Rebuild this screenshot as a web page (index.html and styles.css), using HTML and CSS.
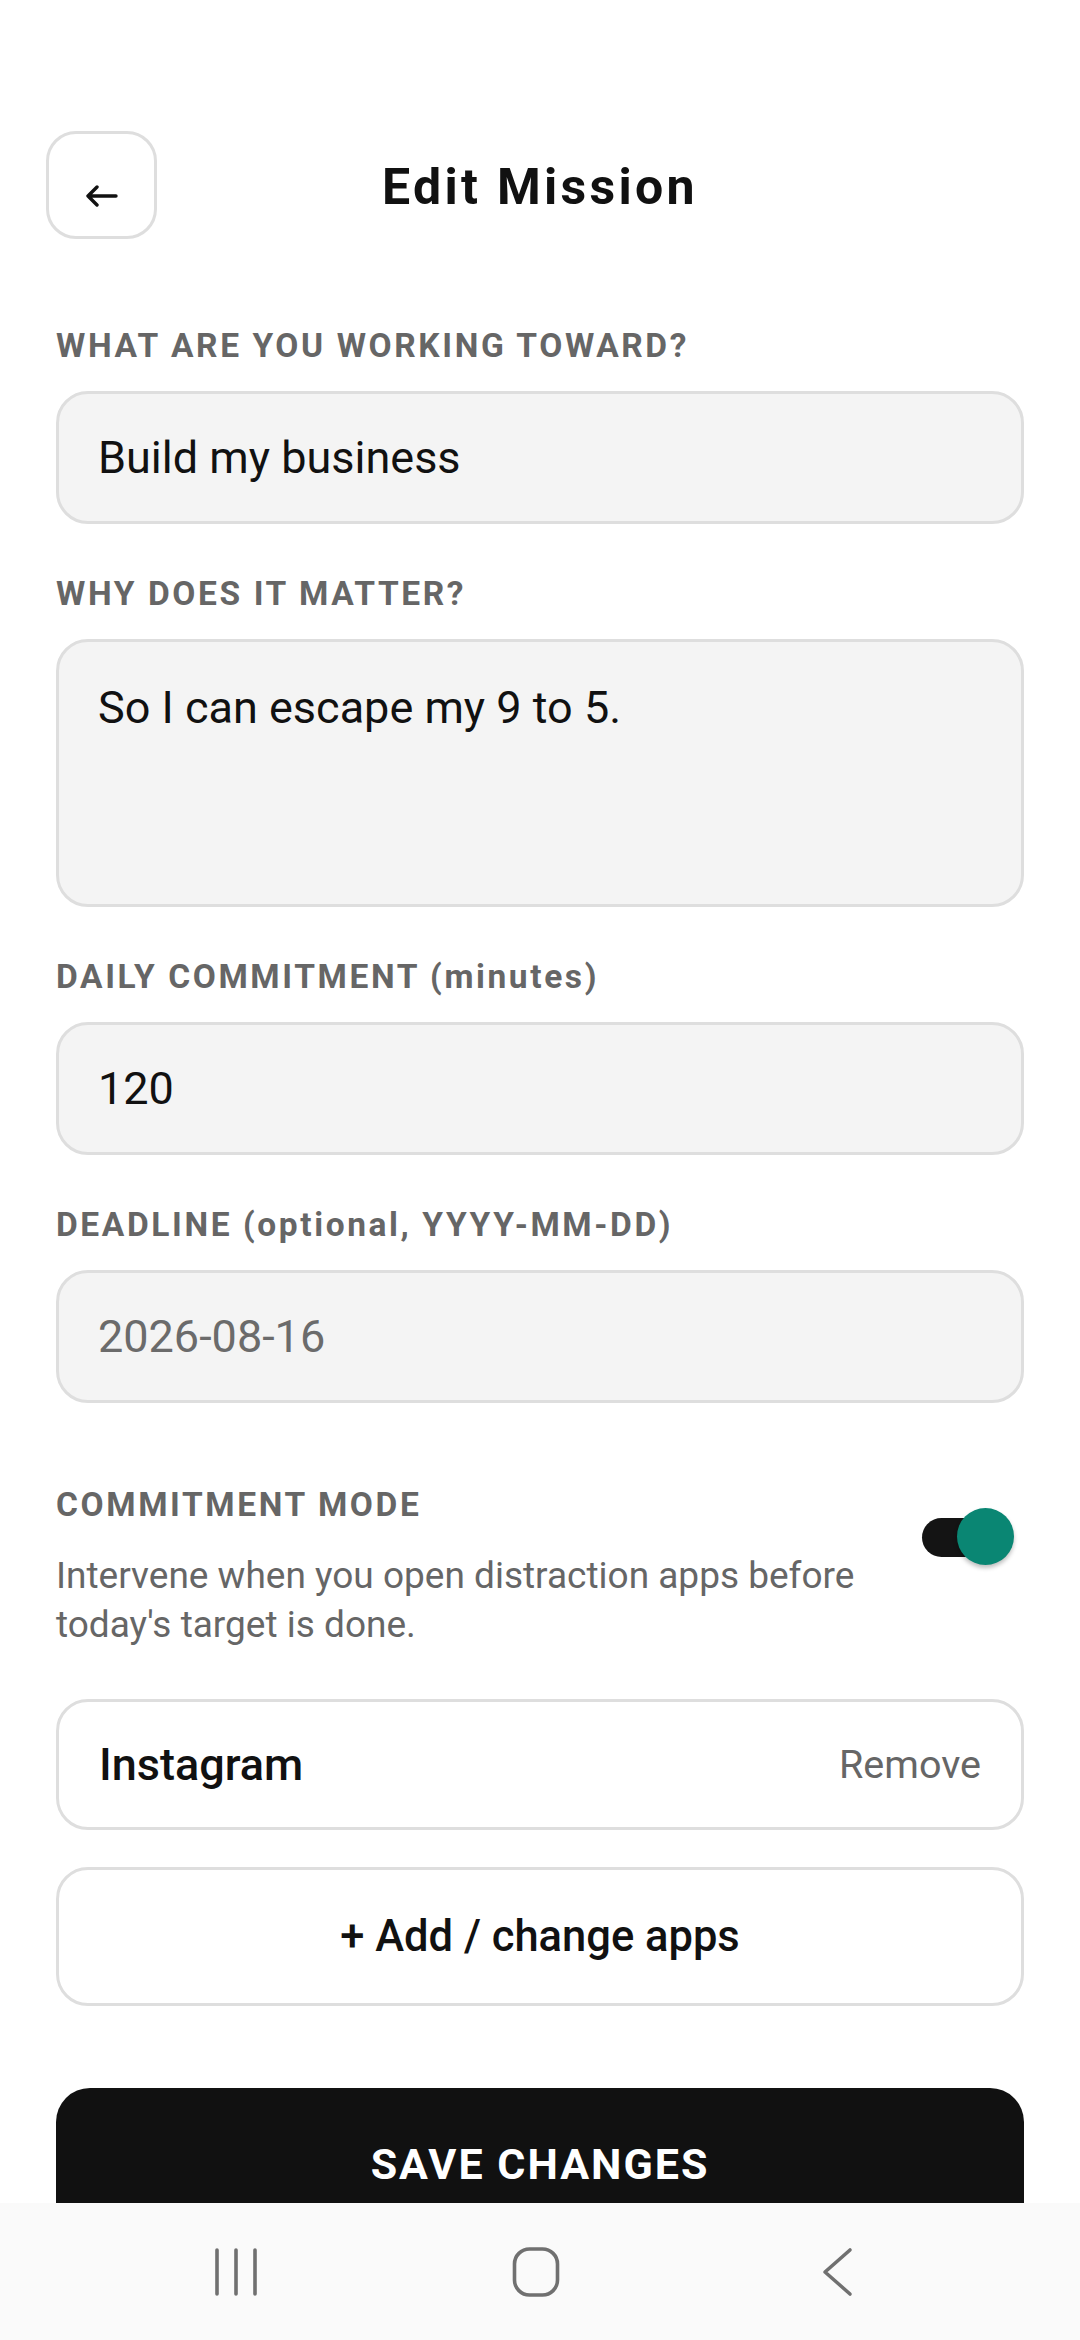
FILE: index.html
```html
<!DOCTYPE html>
<html lang="en">
<head>
    <meta charset="UTF-8">
    <meta name="viewport" content="width=device-width, initial-scale=1.0">
    <title>Edit Mission</title>
    <link rel="stylesheet" href="styles.css">
</head>
<body>
    <div class="screen">
        <!-- header -->
        <header class="topbar">
            <button class="back-btn" aria-label="Back">
                <svg width="34" height="22" viewBox="0 0 34 22">
                    <path d="M3 11 H31 M12 2 L3 11 L12 20" fill="none" stroke="#111" stroke-width="3.4" stroke-linecap="round" stroke-linejoin="round"/>
                </svg>
            </button>
            <h1 class="title">Edit Mission</h1>
            <span></span>
        </header>

        <!-- form -->
        <div class="field">
            <div class="label">WHAT ARE YOU WORKING TOWARD?</div>
            <div class="input">Build my business</div>
        </div>

        <div class="field">
            <div class="label">WHY DOES IT MATTER?</div>
            <div class="input textarea">So I can escape my 9 to 5.</div>
        </div>

        <div class="field">
            <div class="label">DAILY COMMITMENT (minutes)</div>
            <div class="input">120</div>
        </div>

        <div class="field">
            <div class="label">DEADLINE (optional, YYYY-MM-DD)</div>
            <div class="input placeholder">2026-08-16</div>
        </div>

        <!-- commitment mode -->
        <section class="mode">
            <div class="mode-text">
                <div class="label">COMMITMENT MODE</div>
                <p class="mode-desc">Intervene when you open distraction apps before today's target is done.</p>
            </div>
            <div class="toggle">
                <span class="toggle-track"></span>
                <span class="toggle-thumb"></span>
            </div>
        </section>

        <div class="app-row">
            <span class="app-name">Instagram</span>
            <span class="app-remove">Remove</span>
        </div>

        <button class="add-btn">+ Add / change apps</button>

        <button class="save-btn">SAVE CHANGES</button>
    </div>

    <!-- android nav bar -->
    <nav class="navbar">
        <svg width="60" height="60" viewBox="0 0 60 60">
            <path d="M11 8 V52 M30 8 V52 M49 8 V52" stroke="#707070" stroke-width="3.6" stroke-linecap="round"/>
        </svg>
        <svg width="60" height="60" viewBox="0 0 60 60">
            <rect x="8.5" y="7" width="43" height="46" rx="15" fill="none" stroke="#707070" stroke-width="3.6"/>
        </svg>
        <svg width="60" height="60" viewBox="0 0 60 60">
            <path d="M44 8 L19 30 L44 52" fill="none" stroke="#707070" stroke-width="3.6" stroke-linecap="round" stroke-linejoin="round"/>
        </svg>
    </nav>
</body>
</html>
```

FILE: styles.css
```css
/* base */
* {
    margin: 0;
    padding: 0;
    box-sizing: border-box;
}

body {
    font-family: Roboto, "Noto Sans", sans-serif;
    background-color: #ffffff;
    color: #111111;
}

button {
    font-family: inherit;
    cursor: pointer;
}

.screen {
    padding: 131px 56px 300px;
}

/* header */
.topbar {
    display: grid;
    grid-template-columns: 1fr auto 1fr;
    align-items: center;
    margin: 0 -10px 88px;
}

.back-btn {
    width: 111px;
    height: 108px;
    background-color: #ffffff;
    border: 3px solid #dedede;
    border-radius: 30px;
    display: flex;
    align-items: center;
    justify-content: center;
    padding-top: 22px;
}

.title {
    font-size: 50px;
    font-weight: 700;
    letter-spacing: 3.3px;
    color: #111111;
    padding-top: 4px;
}

/* fields */
.field {
    margin-bottom: 51px;
}

.label {
    font-size: 33.5px;
    line-height: 38px;
    font-weight: 700;
    letter-spacing: 2.6px;
    color: #666666;
    margin-bottom: 26px;
}

.input {
    height: 133px;
    background-color: #f4f4f4;
    border: 3px solid #dedede;
    border-radius: 32px;
    padding: 0 39px;
    font-size: 45px;
    display: flex;
    align-items: center;
    color: #111111;
}

.textarea {
    height: 268px;
    align-items: flex-start;
    padding-top: 39px;
}

.placeholder {
    color: #6b6b6b;
}

/* commitment mode */
.mode {
    display: flex;
    justify-content: space-between;
    align-items: flex-start;
    gap: 22px;
    margin-top: 83px;
}

.mode .label {
    margin-bottom: 27px;
}

.mode-desc {
    font-size: 37px;
    line-height: 49px;
    color: #666666;
}

.toggle {
    position: relative;
    flex-shrink: 0;
    width: 92px;
    height: 57px;
    margin-top: 22px;
    margin-right: 10px;
}

.toggle-track {
    position: absolute;
    left: 0;
    top: 10px;
    width: 78px;
    height: 39px;
    border-radius: 20px;
    background-color: #141414;
}

.toggle-thumb {
    position: absolute;
    right: 0;
    top: 0;
    width: 57px;
    height: 57px;
    border-radius: 50%;
    background-color: #0a8673;
    box-shadow: 0 3px 4px rgba(0, 0, 0, 0.25);
}

/* apps */
.app-row {
    margin-top: 50px;
    height: 131px;
    background-color: #ffffff;
    border: 3px solid #dedede;
    border-radius: 32px;
    padding: 0 40px;
    display: flex;
    align-items: center;
    justify-content: space-between;
}

.app-name {
    font-size: 45px;
    font-weight: 500;
    color: #111111;
}

.app-remove {
    font-size: 39.5px;
    color: #666666;
}

.add-btn {
    display: block;
    width: 100%;
    margin-top: 37px;
    height: 139px;
    background-color: #ffffff;
    border: 3px solid #dedede;
    border-radius: 32px;
    font-size: 43.5px;
    font-weight: 500;
    color: #111111;
}

.save-btn {
    display: block;
    width: 100%;
    margin-top: 82px;
    height: 152px;
    background-color: #111111;
    border: none;
    border-radius: 34px;
    font-size: 43px;
    font-weight: 700;
    letter-spacing: 2px;
    color: #ffffff;
}

/* system navigation bar */
.navbar {
    position: fixed;
    left: 0;
    right: 0;
    bottom: 0;
    height: 137px;
    background-color: #fafafa;
    display: flex;
    align-items: center;
    justify-content: center;
    gap: 240px;
    padding-right: 8px;
}
```
